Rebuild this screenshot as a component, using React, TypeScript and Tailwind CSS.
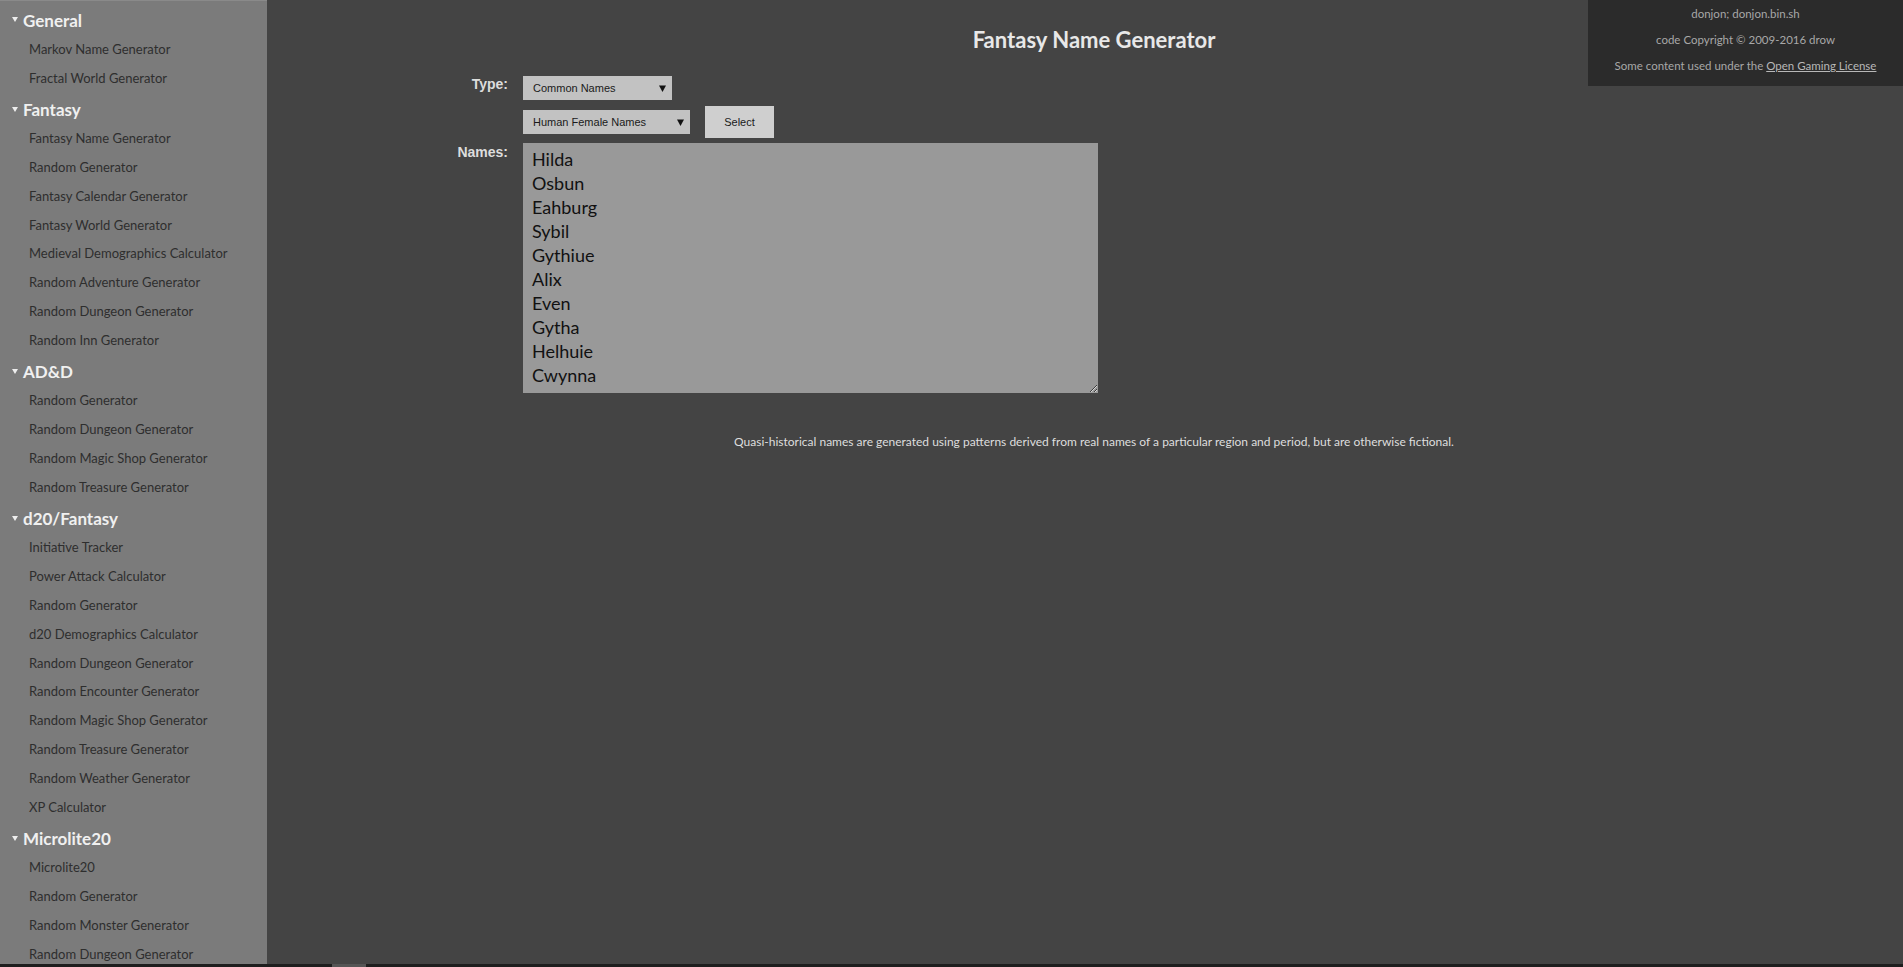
import React from "react";

const sections: { title: string; links: string[] }[] = [
  { title: "General", links: ["Markov Name Generator", "Fractal World Generator"] },
  {
    title: "Fantasy",
    links: [
      "Fantasy Name Generator",
      "Random Generator",
      "Fantasy Calendar Generator",
      "Fantasy World Generator",
      "Medieval Demographics Calculator",
      "Random Adventure Generator",
      "Random Dungeon Generator",
      "Random Inn Generator",
    ],
  },
  {
    title: "AD&D",
    links: [
      "Random Generator",
      "Random Dungeon Generator",
      "Random Magic Shop Generator",
      "Random Treasure Generator",
    ],
  },
  {
    title: "d20/Fantasy",
    links: [
      "Initiative Tracker",
      "Power Attack Calculator",
      "Random Generator",
      "d20 Demographics Calculator",
      "Random Dungeon Generator",
      "Random Encounter Generator",
      "Random Magic Shop Generator",
      "Random Treasure Generator",
      "Random Weather Generator",
      "XP Calculator",
    ],
  },
  {
    title: "Microlite20",
    links: ["Microlite20", "Random Generator", "Random Monster Generator", "Random Dungeon Generator"],
  },
];

const names = ["Hilda", "Osbun", "Eahburg", "Sybil", "Gythiue", "Alix", "Even", "Gytha", "Helhuie", "Cwynna"];

function Arrow() {
  return (
    <svg width="7" height="7" viewBox="0 0 7 7" className="shrink-0">
      <polygon points="0,0.5 7,0.5 3.5,7" fill="#111" />
    </svg>
  );
}

function FakeSelect({ label, width }: { label: string; width: string }) {
  return (
    <div
      className={`${width} h-[24px] bg-[#c2c2c2] flex items-center justify-between pl-[10px] pr-[6px] text-[11px] text-[#1a1a1a] font-['Liberation_Sans',Arial,sans-serif]`}
    >
      <span>{label}</span>
      <Arrow />
    </div>
  );
}

export default function App() {
  return (
    <div className="h-[967px] w-full overflow-hidden flex flex-col bg-[#444444] font-['Lato',sans-serif]">
      <div className="flex h-[964px] overflow-hidden">
        <aside className="w-[267px] shrink-0 bg-[#7b7b7b] border-t border-[#8a8a8a] pt-[5px] overflow-hidden">
          {sections.map((s, i) => (
            <div key={s.title} className={i === 0 ? "" : "mt-[3px]"}>
              <div className="h-[28.8px] flex items-center pl-[12px] text-[17px] font-bold text-[#f0f0f0]">
                <svg width="6" height="5" viewBox="0 0 6 5" className="mr-[5px] -mt-[1px]">
                  <polygon points="0,0 6,0 3,5" fill="#eeeeee" />
                </svg>
                <span>{s.title}</span>
              </div>
              {s.links.map((l, j) => (
                <div
                  key={j}
                  className="h-[28.8px] leading-[28.8px] pl-[29px] text-[13px] text-[#2e2e2e] whitespace-nowrap"
                >
                  {l}
                </div>
              ))}
            </div>
          ))}
        </aside>
        <main className="flex-1 relative pl-[18px]">
          <div className="absolute top-0 right-0 w-[315px] h-[86px] bg-[#2b2b2b] text-center text-[11.5px] leading-[26px] text-[#a8a8a8] pt-[1px]">
            <div>donjon; donjon.bin.sh</div>
            <div>code Copyright © 2009-2016 drow</div>
            <div>
              Some content used under the <span className="underline text-[#b8b8b8]">Open Gaming License</span>
            </div>
          </div>
          <h1 className="text-center pt-[26px] text-[22px] leading-[28px] font-bold text-[#e8e8e8]">
            Fantasy Name Generator
          </h1>
          <div className="ml-[123px] mt-[22px] flex flex-col">
            <div className="flex items-start">
              <div className="w-[100px] text-right text-[14px] leading-[16px] font-bold text-[#dddddd] font-['Liberation_Sans',Arial,sans-serif]">
                Type:
              </div>
              <div className="ml-[15px]">
                <FakeSelect label="Common Names" width="w-[149px]" />
              </div>
            </div>
            <div className="flex items-center mt-[6px]">
              <div className="w-[100px]" />
              <div className="ml-[15px] flex items-center gap-[15px]">
                <FakeSelect label="Human Female Names" width="w-[167px]" />
                <div className="w-[69px] h-[32px] bg-[#cfcfcf] flex items-center justify-center text-[11px] text-[#1a1a1a] font-['Liberation_Sans',Arial,sans-serif]">
                  Select
                </div>
              </div>
            </div>
            <div className="flex items-start mt-[5px]">
              <div className="w-[100px] pt-[1px] text-right text-[14px] leading-[16px] font-bold text-[#dddddd] font-['Liberation_Sans',Arial,sans-serif]">
                Names:
              </div>
              <textarea
                readOnly
                value={names.join("\n")}
                className="ml-[15px] w-[575px] h-[250px] bg-[#999999] text-[#111] text-[18px] leading-[24px] pl-[9px] pt-[4px] outline-none border-0 overflow-hidden font-['Lato',sans-serif]"
              />
            </div>
          </div>
          <p className="text-center mt-[40px] text-[12px] leading-[18px] text-[#dedede]">
            Quasi-historical names are generated using patterns derived from real names of a particular region and
            period, but are otherwise fictional.
          </p>
        </main>
      </div>
      <div className="h-[3px] bg-[#1e1e1e] relative">
        <div className="absolute left-[332px] top-0 w-[34px] h-[3px] bg-[#555555]" />
      </div>
    </div>
  );
}
